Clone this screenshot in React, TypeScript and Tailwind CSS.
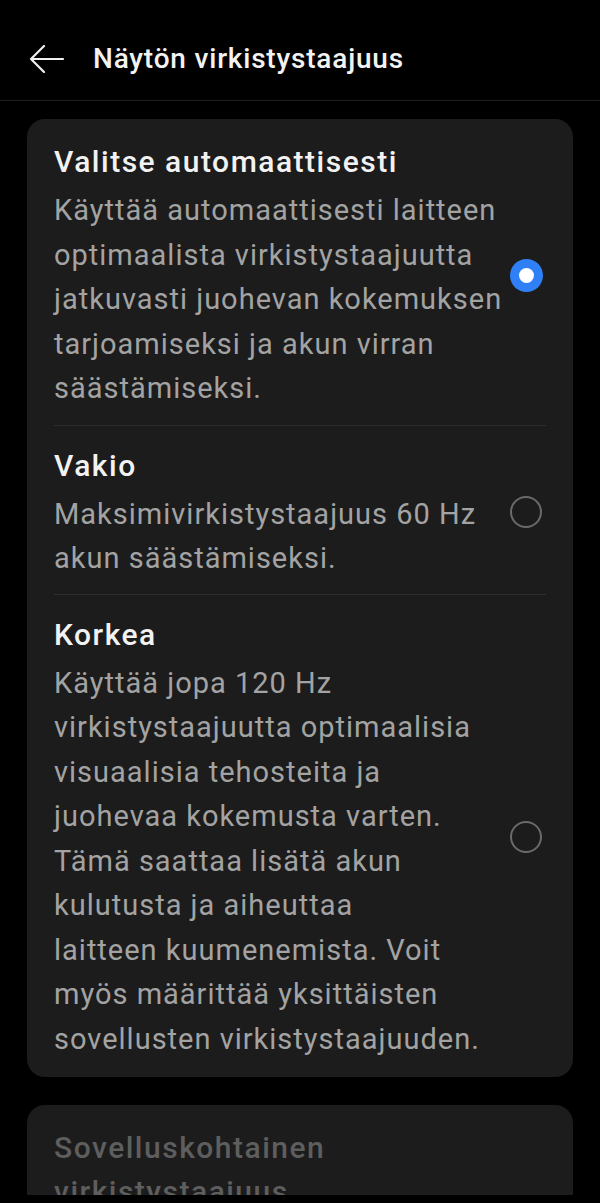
import type { ReactNode } from "react";

function Radio({ checked }: { checked?: boolean }) {
  if (checked) {
    return (
      <div className="flex h-[33px] w-[33px] shrink-0 items-center justify-center rounded-full bg-[#2f80f6]">
        <div className="h-[15px] w-[15px] rounded-full bg-white" />
      </div>
    );
  }
  return <div className="h-[32px] w-[32px] shrink-0 rounded-full border-2 border-[#6a6a6a]" />;
}

function Option({
  title,
  lines,
  checked,
  className,
}: {
  title: string;
  lines: string[];
  checked?: boolean;
  className?: string;
}) {
  return (
    <div className={"flex items-center " + (className ?? "")}>
      <div className="flex-1">
        <div className="mb-[4px] text-[30px] font-medium leading-[44px] tracking-[1.5px] text-[#f2f2f2]">{title}</div>
        <div className="text-[29px] leading-[44.5px] tracking-[1px] text-[#a3a3a3]">
          {lines.map((l) => (
            <div key={l} className="whitespace-nowrap">
              {l}
            </div>
          ))}
        </div>
      </div>
      <div className="mr-[3px] flex w-[34px] justify-center">
        <Radio checked={checked} />
      </div>
    </div>
  );
}

function Divider(): ReactNode {
  return <div className="h-px bg-[#2d2d2d]" />;
}

export default function App() {
  return (
    <div
      className="h-[1203px] w-[600px] overflow-hidden bg-black"
      style={{ fontFamily: "Roboto, 'Noto Sans', sans-serif" }}
    >
      <div className="h-[1195px] overflow-hidden">
        <header className="flex h-[101px] items-center border-b border-[#1e1e1e] pt-[17px]">
          <svg width="36" height="28" viewBox="0 0 36 28" className="ml-[29px]" fill="none">
            <path d="M34 14H2M15 1L2 14l13 13" stroke="#f0f0f0" strokeWidth="2.2" strokeLinecap="round" strokeLinejoin="round" />
          </svg>
          <h1 className="ml-[28px] text-[28px] font-medium tracking-[0.8px] text-[#f2f2f2]">Näytön virkistystaajuus</h1>
        </header>

        <div className="mx-[27px] mt-[18px] rounded-[18px] bg-[#1c1c1c] px-[27px]">
          <Option
            className="pt-[21px] pb-[14px]"
            title="Valitse automaattisesti"
            checked
            lines={[
              "Käyttää automaattisesti laitteen",
              "optimaalista virkistystaajuutta",
              "jatkuvasti juohevan kokemuksen",
              "tarjoamiseksi ja akun virran",
              "säästämiseksi.",
            ]}
          />
          <Divider />
          <Option
            className="pt-[18px] pb-[13px]"
            title="Vakio"
            lines={["Maksimivirkistystaajuus 60 Hz", "akun säästämiseksi."]}
          />
          <Divider />
          <Option
            className="pt-[18px] pb-[16px]"
            title="Korkea"
            lines={[
              "Käyttää jopa 120 Hz",
              "virkistystaajuutta optimaalisia",
              "visuaalisia tehosteita ja",
              "juohevaa kokemusta varten.",
              "Tämä saattaa lisätä akun",
              "kulutusta ja aiheuttaa",
              "laitteen kuumenemista. Voit",
              "myös määrittää yksittäisten",
              "sovellusten virkistystaajuuden.",
            ]}
          />
        </div>

        <div className="mx-[27px] mt-[28px] rounded-[18px] bg-[#1c1c1c] px-[27px] pt-[21px] pb-[20px]">
          <div className="text-[30px] font-medium leading-[44px] tracking-[1.5px] text-[#5e5e5e]">
            Sovelluskohtainen
            <br />
            virkistystaajuus
          </div>
        </div>
      </div>
    </div>
  );
}
